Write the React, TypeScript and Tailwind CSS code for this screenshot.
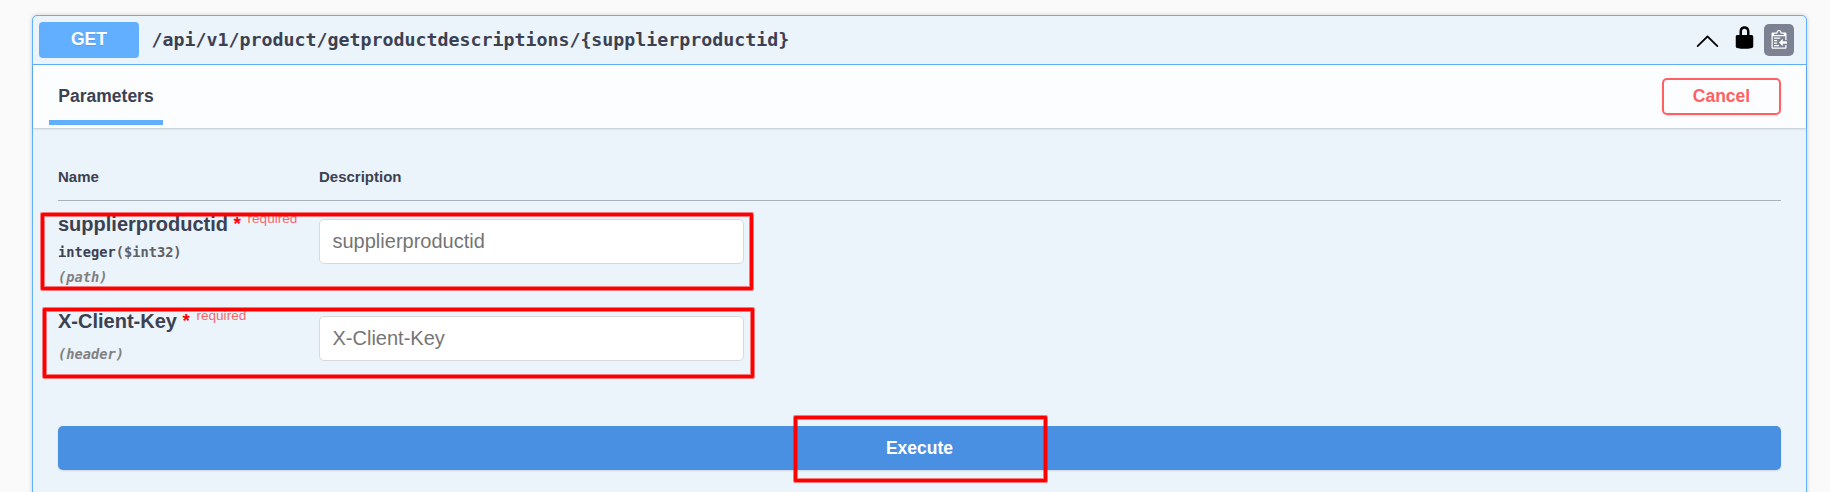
import React from "react";

type Parameter = {
  name: string;
  type?: string;
  format?: string;
  location: string;
  rowClass: string;
  locationClass: string;
};

const parameters: Parameter[] = [
  {
    name: "supplierproductid",
    type: "integer",
    format: "($int32)",
    location: "(path)",
    rowClass: "h-[97px]",
    locationClass: "mt-[3px]",
  },
  {
    name: "X-Client-Key",
    location: "(header)",
    rowClass: "h-[128px]",
    locationClass: "mt-[10px]",
  },
];

function ChevronUp() {
  return (
    <svg className="h-[25px] w-[25px]" viewBox="0 0 20 20" fill="black">
      <path d="M 17.418 14.908 C 17.69 15.176 18.127 15.176 18.397 14.908 C 18.667 14.64 18.668 14.207 18.397 13.939 L 10.489 6.109 C 10.219 5.841 9.782 5.841 9.51 6.109 L 1.602 13.939 C 1.332 14.207 1.332 14.64 1.602 14.908 C 1.873 15.176 2.311 15.176 2.581 14.908 L 10 7.767 L 17.418 14.908 Z" />
    </svg>
  );
}

function Lock() {
  return (
    <svg className="h-[25px] w-[25px]" viewBox="0 0 20 20" fill="black">
      <path d="M15.8 8H14V5.6C14 2.703 12.665 1 10 1 7.334 1 6 2.703 6 5.6V8H4c-.553 0-1 .646-1 1.199V17c0 .549.428 1.139.951 1.307l1.197.387C5.672 18.861 6.55 19 7.1 19h5.8c.549 0 1.428-.139 1.951-.307l1.196-.387c.524-.167.953-.757.953-1.306V9.199C17 8.646 16.352 8 15.8 8zM12 8H8V5.199C8 3.754 8.797 3 10 3c1.203 0 2 .754 2 2.199V8z" />
    </svg>
  );
}

function Clipboard() {
  return (
    <svg className="mr-[2px] h-5 w-[18.75px]" viewBox="0 0 15 16" fill="#ffffff">
      <g transform="translate(2, -1)">
        <path
          fillRule="evenodd"
          d="M2 13h4v1H2v-1zm5-6H2v1h5V7zm2 3V8l-3 3 3 3v-2h5v-2H9zM4.500 9H2v1h2.500V9zM2 12h2.500v-1H2v1zm9 1h1v2c-.020.280-.110.520-.300.700-.190.180-.420.280-.700.300H1c-.550 0-1-.450-1-1V4c0-.550.450-1 1-1h3c0-1.110.890-2 2-2 1.110 0 2 .890 2 2h3c.550 0 1 .450 1 1v5h-1V6H1v9h10v-2zM2 5h8c0-.550-.450-1-1-1H8c-.550 0-1-.450-1-1s-.450-1-1-1-1 .450-1 1-.450 1-1 1H3c-.550 0-1 .450-1 1z"
        />
      </g>
    </svg>
  );
}

function ParameterRow({ parameter }: { parameter: Parameter }) {
  return (
    <div className={"flex " + parameter.rowClass}>
      <div className="w-[261px] shrink-0 pt-[10px]">
        <div className="flex h-[25px] items-center text-[20px] font-bold whitespace-nowrap">
          <span>{parameter.name}</span>
          <span className="mt-[2px] ml-[5.500px] w-[8px] text-[19px] text-[#ff0000]">*</span>
          <span className="relative -top-[4px] ml-[6px] text-[13.600px] font-normal text-[#ff0000]/60">
            required
          </span>
        </div>
        {parameter.type && (
          <div className="mt-[5px] h-[22px] font-['DejaVu_Sans_Mono',monospace] text-[13.700px] leading-[22px] font-bold">
            {parameter.type}
            <span className="text-[#606060]">{parameter.format}</span>
          </div>
        )}
        <div
          className={
            "h-[22px] font-['DejaVu_Sans_Mono',monospace] text-[13.700px] leading-[22px] font-bold text-[#808080] italic " +
            parameter.locationClass
          }
        >
          {parameter.location}
        </div>
      </div>
      <div className="pt-[18px]">
        <input
          type="text"
          placeholder={parameter.name}
          className="block h-[45px] w-[425px] rounded-[5px] border border-[#d9d9d9] bg-white px-[12.500px] text-[20px] placeholder:text-[#757575] placeholder:opacity-100"
        />
      </div>
    </div>
  );
}

export default function App() {
  return (
    <div className="relative h-[492px] overflow-hidden bg-[#fafafa] pt-[15px] pr-[23px] pl-[32px] font-['Liberation_Sans',Arial,sans-serif] text-[#3b4151]">
      <div className="h-[520px] rounded-[5px] border border-[#61affe] bg-[#ebf3fb] shadow-[0_0_4px_rgba(0,0,0,0.19)]">
        <div className="flex h-[49px] items-center border-b border-[#61affe] pr-[12px] pl-[6px]">
          <div className="flex h-9 w-[100px] items-center justify-center rounded-[4px] bg-[#61affe] pb-[2px] text-[17.500px] font-bold text-white [text-shadow:0_1px_0_rgba(0,0,0,0.1)]">
            GET
          </div>
          <div className="ml-[12.500px] flex-1 font-['DejaVu_Sans_Mono',monospace] text-[18.270px] font-bold">
            {"/api/v1/product/getproductdescriptions/{supplierproductid}"}
          </div>
          <ChevronUp />
          <div className="mr-[7px] ml-[12px] -mt-[5px]">
            <Lock />
          </div>
          <div className="flex h-8 w-[30px] items-center justify-center rounded-[5px] bg-[#7d8293]">
            <Clipboard />
          </div>
        </div>

        <div className="flex h-[63px] justify-between bg-[#fcfdfe] pr-[25px] pl-[16px] shadow-[0_1px_2px_rgba(0,0,0,0.18)]">
          <div className="mb-[3px] flex w-[114px] justify-center border-b-[5px] border-[#61affe] pt-[20px] text-[17.500px] leading-[22px] font-bold">
            Parameters
          </div>
          <button className="mt-[13px] flex h-[37px] w-[119px] items-center justify-center rounded-[5px] border-2 border-[#ff6060] pb-px text-[17.500px] font-bold text-[#ff6060] shadow-[0_1px_2px_rgba(0,0,0,0.1)]">
            Cancel
          </button>
        </div>

        <div className="px-[25px]">
          <div className="flex h-[73px] items-start border-b border-[#a9afbc] pt-[40px] text-[15px] leading-[18px] font-bold">
            <div className="w-[261px]">Name</div>
            <div>Description</div>
          </div>
          {parameters.map((p) => (
            <ParameterRow key={p.name} parameter={p} />
          ))}
          <button className="flex h-11 w-full items-center justify-center rounded-[5px] bg-[#4990e2] text-[17.500px] font-bold text-white shadow-[0_1px_2px_rgba(0,0,0,0.12)]">
            Execute
          </button>
        </div>
      </div>

      <div className="pointer-events-none absolute top-[213px] left-[41px] h-[77px] w-[712px] rounded-[1px] border-3 border-[#ff0000] shadow-[0_0_0_1px_rgba(255,0,0,0.5),inset_0_0_0_1px_rgba(255,0,0,0.5)]" />
      <div className="pointer-events-none absolute top-[308px] left-[43px] h-[70px] w-[711px] rounded-[1px] border-3 border-[#ff0000] shadow-[0_0_0_1px_rgba(255,0,0,0.5),inset_0_0_0_1px_rgba(255,0,0,0.5)]" />
      <div className="pointer-events-none absolute top-[416px] left-[794px] h-[66px] w-[253px] rounded-[1px] border-3 border-[#ff0000] shadow-[0_0_0_1px_rgba(255,0,0,0.5),inset_0_0_0_1px_rgba(255,0,0,0.5)]" />
    </div>
  );
}
